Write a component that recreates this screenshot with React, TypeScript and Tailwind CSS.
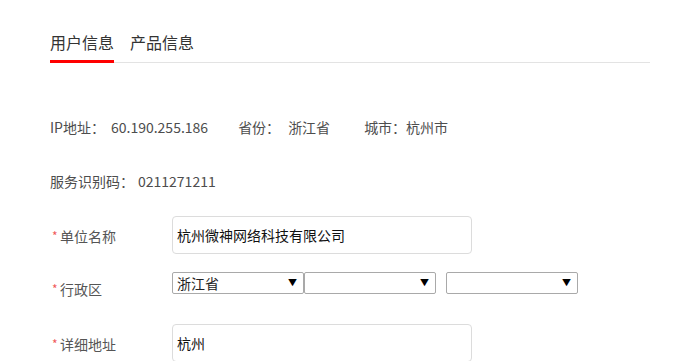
import React from 'react';

const font = { fontFamily: '"Noto Sans CJK SC", "Microsoft YaHei", sans-serif' };

// fake select box, drawn by hand so the look stays stable
function SelectBox({ value, className = '' }: { value?: string; className?: string }) {
  return (
    <div
      className={`flex h-[22px] w-[132px] items-center justify-between rounded-[2px] border border-[#a9a9a9] bg-white pl-[4px] pr-[6px] text-[14px] leading-[20px] text-[#222] ${className}`}
    >
      <span>{value}</span>
      <span className="text-[9px] text-black">▼</span>
    </div>
  );
}

function Label({ text }: { text: string }) {
  return (
    <div className="flex w-[122px] shrink-0 items-center text-[14px] leading-[40px] text-[#555]">
      <span className="w-[10px] pl-[2px] text-[12px] text-[#f05a5a]">*</span>
      <span>{text}</span>
    </div>
  );
}

export default function App() {
  return (
    <div className="min-h-screen bg-white pl-[50px] pt-[30px]" style={font}>
      <div className="w-[600px]">
        {/* tabs */}
        <div className="flex gap-4 border-b border-[#e3e3e3]">
          <div className="-mb-px border-b-[3px] border-[#ff0000] pb-[6px] text-[16px] leading-[24px] text-[#333]">
            用户信息
          </div>
          <div className="pb-[6px] text-[16px] leading-[24px] text-[#333]">产品信息</div>
        </div>

        {/* info */}
        <div className="mt-[54px] flex text-[14px] leading-[20px] text-[#4d4d4d]">
          <span>IP地址：</span>
          <span className="ml-[6px]">60.190.255.186</span>
          <span className="ml-[30px]">省份：</span>
          <span className="ml-[8px]">浙江省</span>
          <span className="ml-[34px]">城市：杭州市</span>
        </div>
        <div className="mt-[34px] flex text-[14px] leading-[20px] text-[#4d4d4d]">
          <span>服务识别码：</span>
          <span className="ml-[4px]">0211271211</span>
        </div>

        {/* form */}
        <div className="mt-[25px] flex items-start">
          <Label text="单位名称" />
          <div className="flex h-[38px] w-[300px] items-center rounded-[4px] border border-[#dcdcdc] px-[4px] text-[14px] text-[#111]">
            杭州微神网络科技有限公司
          </div>
        </div>

        <div className="mt-[13px] flex items-start">
          <Label text="行政区" />
          <div className="mt-[3px] flex">
            <SelectBox value="浙江省" />
            <SelectBox />
            <SelectBox className="ml-[10px]" />
          </div>
        </div>

        <div className="mt-[15px] flex items-start">
          <Label text="详细地址" />
          <div className="flex h-[38px] w-[300px] items-center rounded-[4px] border border-[#dcdcdc] px-[4px] text-[14px] text-[#111]">
            杭州
          </div>
        </div>
      </div>
    </div>
  );
}
